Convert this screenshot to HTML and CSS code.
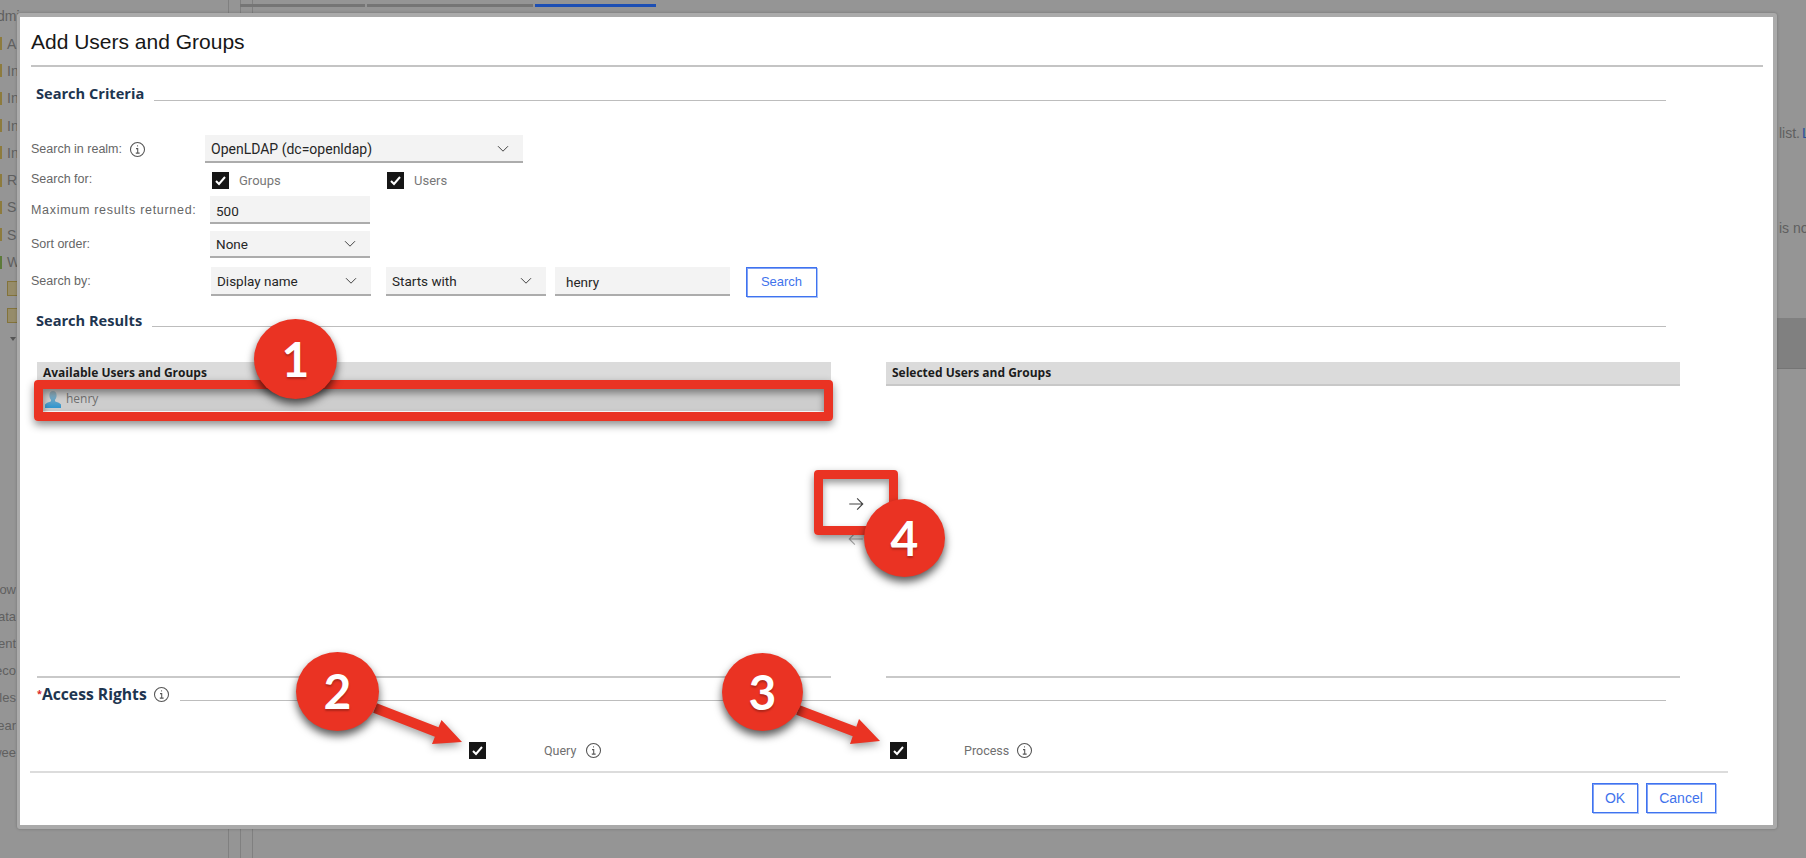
FILE: index.html
```html
<!DOCTYPE html>
<html>
<head>
    <meta charset="utf-8">
    <title>Add Users and Groups</title>
    <link rel="stylesheet" href="styles.css">
</head>
<body>
    <div class="strona">
        <aside class="boczny">
            <div class="boczny-tytul">dmi</div>
            <div class="boczny-pozycja"><i class="znak"></i>A</div>
            <div class="boczny-pozycja"><i class="znak"></i>In</div>
            <div class="boczny-pozycja"><i class="znak"></i>In</div>
            <div class="boczny-pozycja"><i class="znak"></i>In</div>
            <div class="boczny-pozycja"><i class="znak"></i>In</div>
            <div class="boczny-pozycja"><i class="znak"></i>R</div>
            <div class="boczny-pozycja"><i class="znak"></i>S</div>
            <div class="boczny-pozycja"><i class="znak"></i>S</div>
            <div class="boczny-pozycja"><i class="znak znak-w"></i>W</div>
            <div class="folder"></div>
            <div class="folder"></div>
            <div class="trojkat"></div>
            <div class="boczny-dol">
                <div>ow</div>
                <div>ata</div>
                <div>ent</div>
                <div>eco</div>
                <div>oles</div>
                <div>ear</div>
                <div>wee</div>
            </div>
        </aside>
        <div class="pion"></div>
        <div class="pion"></div>
        <main class="tresc">
            <div class="zakladki">
                <span class="zakladka z1"></span>
                <span class="zakladka z2"></span>
                <span class="zakladka z3"></span>
            </div>
            <div class="tlo-tekst t1">list. <span class="link">L</span></div>
            <div class="tlo-tekst t2">is no</div>
            <div class="tlo-pasek"></div>
        </main>
    </div>

    <div class="okno">
        <h1 class="okno-tytul">Add Users and Groups</h1>

        <div class="sekcja sekcja-kryteria">
            <h2>Search Criteria</h2>
            <span class="sekcja-linia"></span>
        </div>

        <div class="wiersz wiersz-realm">
            <label class="etykieta">Search in realm:
                <svg class="info" viewBox="0 0 16 16"><circle cx="8" cy="8" r="6.6"/><path d="M6.6 7.2H8.2V11.4M6.4 11.4H10M7.7 4.6h.8"/></svg>
            </label>
            <div class="pole pole-realm">OpenLDAP (dc=openldap)
                <svg class="szewron" viewBox="0 0 12 8"><path d="M1 1.2l5 5 5-5"/></svg>
            </div>
        </div>
        <div class="wiersz wiersz-for">
            <label class="etykieta etykieta-wyzej">Search for:</label>
            <div class="opcja opcja-groups">
                <svg class="check" viewBox="0 0 17 17"><rect width="17" height="17"/><path d="M4 9l3 3 6-7"/></svg>
                <span>Groups</span>
            </div>
            <div class="opcja">
                <svg class="check" viewBox="0 0 17 17"><rect width="17" height="17"/><path d="M4 9l3 3 6-7"/></svg>
                <span>Users</span>
            </div>
        </div>
        <div class="wiersz wiersz-max">
            <label class="etykieta etykieta-max">Maximum results returned:</label>
            <div class="pole pole-maly pole-wciecie pole-wartosc">500</div>
        </div>
        <div class="wiersz wiersz-sort">
            <label class="etykieta etykieta-lekko">Sort order:</label>
            <div class="pole pole-maly pole-wciecie">None
                <svg class="szewron" viewBox="0 0 12 8"><path d="M1 1.2l5 5 5-5"/></svg>
            </div>
        </div>
        <div class="wiersz wiersz-by">
            <label class="etykieta etykieta-lekko">Search by:</label>
            <div class="pole pole-maly pole-by">Display name
                <svg class="szewron" viewBox="0 0 12 8"><path d="M1 1.2l5 5 5-5"/></svg>
            </div>
            <div class="pole pole-maly pole-starts">Starts with
                <svg class="szewron" viewBox="0 0 12 8"><path d="M1 1.2l5 5 5-5"/></svg>
            </div>
            <div class="pole pole-szukaj pole-wartosc">henry</div>
            <button class="przycisk przycisk-szukaj">Search</button>
        </div>

        <div class="sekcja sekcja-wyniki">
            <h2>Search Results</h2>
            <span class="sekcja-linia"></span>
        </div>

        <div class="listy">
            <div class="lista">
                <div class="lista-naglowek">Available Users and Groups</div>
                <div class="lista-pozycja">
                    <svg class="osoba" viewBox="0 0 18 18">
                        <defs><linearGradient id="nieb" x1="0" y1="0" x2="0" y2="1"><stop offset="0" stop-color="#9fb4bd"/><stop offset="1" stop-color="#2f95cf"/></linearGradient></defs>
                        <path fill="url(#nieb)" d="M9 1c2.4 0 3.6 1.8 3.6 4.2 0 2-.8 3.6-1.6 4.6v1.4c1.8 1 5 1.6 6 3.2V18H1v-3.6c1-1.6 4.2-2.2 6-3.2V9.8C6.200 8.800 5.400 7.200 5.400 5.200 5.400 2.800 6.600 1 9 1z"/>
                    </svg>
                    <span>henry</span>
                </div>
            </div>
            <div class="strzalki">
                <svg class="strzalka" viewBox="0 0 16 16"><path d="M2 8h12M9 3l5 5-5 5"/></svg>
                <svg class="strzalka strzalka-off" viewBox="0 0 16 16"><path d="M14 8H2M7 3L2 8l5 5"/></svg>
            </div>
            <div class="lista">
                <div class="lista-naglowek">Selected Users and Groups</div>
            </div>
        </div>

        <div class="sekcja sekcja-prawa">
            <h2><span class="gwiazdka">*</span>Access Rights
                <svg class="info" viewBox="0 0 16 16"><circle cx="8" cy="8" r="6.6"/><path d="M6.6 7.2H8.2V11.4M6.4 11.4H10M7.7 4.6h.8"/></svg>
            </h2>
            <span class="sekcja-linia"></span>
        </div>

        <div class="prawa">
            <div class="prawo prawo-query">
                <svg class="check" viewBox="0 0 17 17"><rect width="17" height="17"/><path d="M4 9l3 3 6-7"/></svg>
                <span class="prawo-nazwa">Query</span>
                <svg class="info" viewBox="0 0 16 16"><circle cx="8" cy="8" r="6.6"/><path d="M6.6 7.2H8.2V11.4M6.4 11.4H10M7.7 4.6h.8"/></svg>
            </div>
            <div class="prawo prawo-process">
                <svg class="check" viewBox="0 0 17 17"><rect width="17" height="17"/><path d="M4 9l3 3 6-7"/></svg>
                <span class="prawo-nazwa">Process</span>
                <svg class="info" viewBox="0 0 16 16"><circle cx="8" cy="8" r="6.6"/><path d="M6.6 7.2H8.2V11.4M6.4 11.4H10M7.7 4.6h.8"/></svg>
            </div>
        </div>

        <div class="stopka">
            <button class="przycisk przycisk-ok">OK</button>
            <button class="przycisk przycisk-cancel">Cancel</button>
        </div>
    </div>

    <!-- adnotacje na zrzucie -->
    <div class="ramka ramka-lista"></div>
    <div class="ramka ramka-strzalka"></div>
    <svg class="wskaznik" viewBox="0 0 1806 858">
        <polygon points="376.800,703.300 438.500,727.300 441.500,720 462,742 432,744 434.900,736.700 373.200,712.700"/>
        <polygon points="799.800,705.300 856.300,726.800 859,719 880,741 850,744 852.700,736.200 796.200,714.700"/>
    </svg>
    <div class="kolko k1">1</div>
    <div class="kolko k2">2</div>
    <div class="kolko k3">3</div>
    <div class="kolko k4">4</div>
</body>
</html>
```

FILE: styles.css
```css
html, body {
    margin: 0;
    height: 100%;
    background-color: #959595;
    overflow: hidden;
    font-family: "Liberation Sans", sans-serif;
}

.strona {
    display: flex;
    height: 858px;
}

.boczny {
    width: 228px;
    box-sizing: border-box;
    color: #5f5f5f;
    font-size: 14px;
    overflow: hidden;
}
.boczny-tytul {
    margin: 9px 0 0 -3px;
    height: 14px;
    line-height: 14px;
}
.boczny-pozycja {
    display: flex;
    align-items: center;
    gap: 5px;
    height: 27.3px;
    margin-left: 0;
    position: relative;
    top: 7px;
}
.znak {
    width: 2px;
    height: 13px;
    background-color: #8d7b3d;
}
.znak-w {
    background-color: #5c7a3a;
}
.folder {
    width: 9px;
    height: 13px;
    margin: 12px 0 4px 7px;
    background-color: #968c6a;
    border: 1px solid #83733a;
}
.folder + .folder {
    margin-top: 12px;
}
.trojkat {
    width: 0;
    margin: 14px 0 0 10px;
    border-left: 3px solid transparent;
    border-right: 3px solid transparent;
    border-top: 4px solid #555;
}
.boczny-dol {
    margin-top: 241px;
    width: 16px;
    overflow: hidden;
}
.boczny-dol div {
    display: flex;
    justify-content: flex-end;
    height: 27.2px;
    line-height: 16px;
    white-space: nowrap;
    font-size: 13px;
    color: #606060;
}

.pion {
    width: 11px;
    border-left: 1px solid #808080;
}

.tresc {
    flex: 1;
    position: relative;
    border-left: 1px solid #808080;
}
.zakladki {
    display: flex;
    gap: 2px;
    padding: 4px 0 0 0;
    margin-left: -13px;
}
.zakladka {
    height: 3px;
    background-color: #757575;
}
.z1 { width: 125px; }
.z2 { width: 166px; }
.z3 { width: 121px; background-color: #1d4fb4; }

.tlo-tekst {
    position: absolute;
    left: 1526px;
    font-size: 14px;
    color: #5f5f5f;
    white-space: nowrap;
}
.t1 { top: 125px; }
.t2 { top: 220px; }
.link { color: #2a4f9c; margin-left: -2px; }
.tlo-pasek {
    position: absolute;
    left: 1500px;
    right: 0;
    top: 318px;
    height: 50px;
    background-color: #808080;
    border-bottom: 1px solid #757575;
}

/* okno dialogowe */
.okno {
    position: absolute;
    left: 17px;
    top: 13px;
    width: 1753px;
    height: 808px;
    background-color: white;
    border: 4px solid #aaa;
    border-left-width: 3px;
    border-radius: 3px;
    box-shadow: 0 0 3px rgba(0, 0, 0, 0.25);
    color: #666;
    font-size: 12.500px;
}
.okno-tytul {
    margin: 0 10px 0 11px;
    height: 48px;
    padding-top: 0;
    line-height: 50px;
    font-size: 21px;
    font-weight: normal;
    color: #171717;
    border-bottom: 2px solid #c4c4c4;
}

.sekcja {
    display: flex;
    height: 20px;
    margin-left: 16px;
    margin-right: 107px;
}
.sekcja h2 {
    display: flex;
    align-items: center;
    gap: 6px;
    margin: 0;
    font-size: 14.600px;
    line-height: 20px;
    font-family: "Open Sans", sans-serif;
    font-weight: 700;
    color: #1e3550;
    white-space: nowrap;
}
.sekcja-linia {
    flex: 1;
    align-self: flex-end;
    margin: 0 0 2px 10px;
    border-bottom: 1px solid #bdbdbd;
}
.sekcja-kryteria { margin-top: 16px; }
.sekcja-wyniki { margin-top: 14px; }
.sekcja-wyniki .sekcja-linia { margin-bottom: 3px; }
.sekcja-prawa { margin-top: 6px; margin-left: 17px; }
.sekcja-prawa h2 { font-size: 15.700px; }
.sekcja-prawa .sekcja-linia { margin-bottom: 3px; }
.gwiazdka {
    color: #da1e28;
    margin-right: -6px;
    font-size: 9px;
}

.wiersz {
    display: flex;
    padding-left: 11px;
    align-items: center;
}
.etykieta {
    display: flex;
    align-items: center;
    gap: 7px;
    width: 174px;
    white-space: nowrap;
    flex: none;
}
.etykieta-wyzej { margin-top: -4px; }
.etykieta-lekko { margin-top: -2px; }
.etykieta-max { letter-spacing: 0.7px; }
.info {
    width: 17px;
    height: 17px;
    fill: none;
    stroke: #555;
    stroke-width: 1;
    flex: none;
}
.wiersz-realm { margin-top: 32px; height: 28px; }
.wiersz-for { margin-top: 9px; height: 17px; }
.wiersz-max { margin-top: 7px; height: 28px; }
.wiersz-sort { margin-top: 7px; height: 27px; }
.wiersz-by { margin-top: 9px; height: 29px; }

.pole {
    display: flex;
    align-items: center;
    justify-content: space-between;
    box-sizing: border-box;
    height: 100%;
    padding: 0 14px 0 6px;
    background-color: #f3f3f3;
    border-bottom: 2px solid #acacac;
    color: #262626;
    font-family: Roboto, sans-serif;
    font-size: 13.500px;
}
.pole-realm { width: 318px; font-size: 14px; padding-top: 1px; }
.pole-maly { width: 160px; }
.pole-wciecie { margin-left: 5px; }
.pole-by { margin-left: 6px; }
.pole-starts { margin-left: 15px; }
.pole-szukaj { width: 175px; margin-left: 9px; padding-left: 11px; }
.pole-wartosc { padding-top: 3px; }
.szewron {
    width: 12px;
    height: 8px;
    fill: none;
    stroke: #444;
    stroke-width: 1;
    flex: none;
}

.opcja {
    display: flex;
    align-items: center;
    gap: 10px;
    margin-left: 7px;
    font-family: Roboto, sans-serif;
    font-size: 13px;
    color: #777;
}
.opcja-groups { width: 168px; }
.check {
    width: 17px;
    height: 17px;
    flex: none;
    fill: #161616;
    stroke: none;
}
.check path {
    fill: none;
    stroke: white;
    stroke-width: 2;
}

.przycisk {
    height: 30px;
    padding: 0;
    background-color: white;
    border: 1px solid #3f73f0;
    box-shadow: 1px 1px 0 #a9c2f8, inset 1px 1px 0 #7fa0f4;
    color: #3f73ec;
    font-family: "Liberation Sans", sans-serif;
    font-size: 13px;
}
.przycisk-szukaj { width: 71px; margin-left: 16px; }

.listy {
    display: grid;
    grid-template-columns: 794px 55px 794px;
    height: 316px;
    margin: 32px 0 0 17px;
}
.lista {
    border-bottom: 2px solid #c9c9c9;
}
.lista-naglowek {
    box-sizing: border-box;
    height: 24px;
    padding: 2px 0 0 6px;
    line-height: 18px;
    background-color: #dbdbdb;
    border-bottom: 2px solid #c8c8c8;
    font-family: "Open Sans", sans-serif;
    font-size: 12px;
    font-weight: 700;
    color: #1c1c1c;
    white-space: nowrap;
}
.lista-pozycja {
    display: flex;
    align-items: center;
    gap: 4px;
    height: 25px;
    padding-left: 7px;
    background-color: #cdcdcd;
    color: #6f6f6f;
    font-family: "Open Sans", sans-serif;
    font-size: 12px;
}
.osoba {
    width: 18px;
    height: 18px;
}
.strzalki {
    display: flex;
    flex-direction: column;
    align-items: center;
    gap: 17px;
    padding: 133px 6px 0 0;
}
.strzalka {
    width: 18px;
    height: 18px;
    fill: none;
    stroke: #444;
    stroke-width: 1;
}
.strzalka-off {
    stroke: #aaa;
}

.prawa {
    display: flex;
    margin-top: 38px;
    padding-left: 449px;
}
.prawo {
    display: flex;
    align-items: center;
    height: 17px;
}
.prawo-query { width: 421px; }
.prawo-nazwa {
    margin-left: 58px;
    margin-right: 9px;
    font-family: Roboto, sans-serif;
    color: #6f6f6f;
}
.prawo-process .prawo-nazwa { margin-left: 57px; margin-right: 7px; }

.stopka {
    display: flex;
    justify-content: flex-end;
    gap: 8px;
    margin: 12px 45px 0 10px;
    padding: 10px 12px 0 0;
    border-top: 2px solid #dcdcdc;
}
.przycisk-ok { width: 46px; font-size: 14px; }
.przycisk-cancel { width: 70px; font-size: 14px; }

/* czerwone adnotacje */
.ramka {
    position: absolute;
    box-sizing: border-box;
    border: 9px solid #ea3323;
    border-radius: 4px;
    box-shadow: 0 4px 8px rgba(0, 0, 0, 0.45), inset 0 4px 7px rgba(0, 0, 0, 0.4);
}
.ramka-lista { left: 34px; top: 380px; width: 799px; height: 41px; }
.ramka-strzalka { left: 814px; top: 470px; width: 84px; height: 65px; }

.wskaznik {
    position: absolute;
    left: 0;
    top: 0;
    width: 1806px;
    height: 858px;
    fill: #ea3323;
    filter: drop-shadow(0 3px 4px rgba(0, 0, 0, 0.4));
}

.kolko {
    position: absolute;
    display: flex;
    align-items: center;
    justify-content: center;
    box-sizing: border-box;
    width: 81px;
    height: 78px;
    padding-bottom: 2px;
    border-radius: 50%;
    background-color: #ea3323;
    box-shadow: 0 5px 8px rgba(0, 0, 0, 0.65);
    color: white;
    font-family: Lato, sans-serif;
    font-size: 48px;
    font-weight: 700;
    text-shadow: 0 2px 2px rgba(0, 0, 0, 0.25);
}
.k1 { left: 254px; top: 319px; width: 83px; height: 80px; }
.k2 { left: 296px; top: 652px; width: 83px; height: 79px; }
.k3 { left: 722px; top: 653px; }
.k4 { left: 864px; top: 499px; }
```
